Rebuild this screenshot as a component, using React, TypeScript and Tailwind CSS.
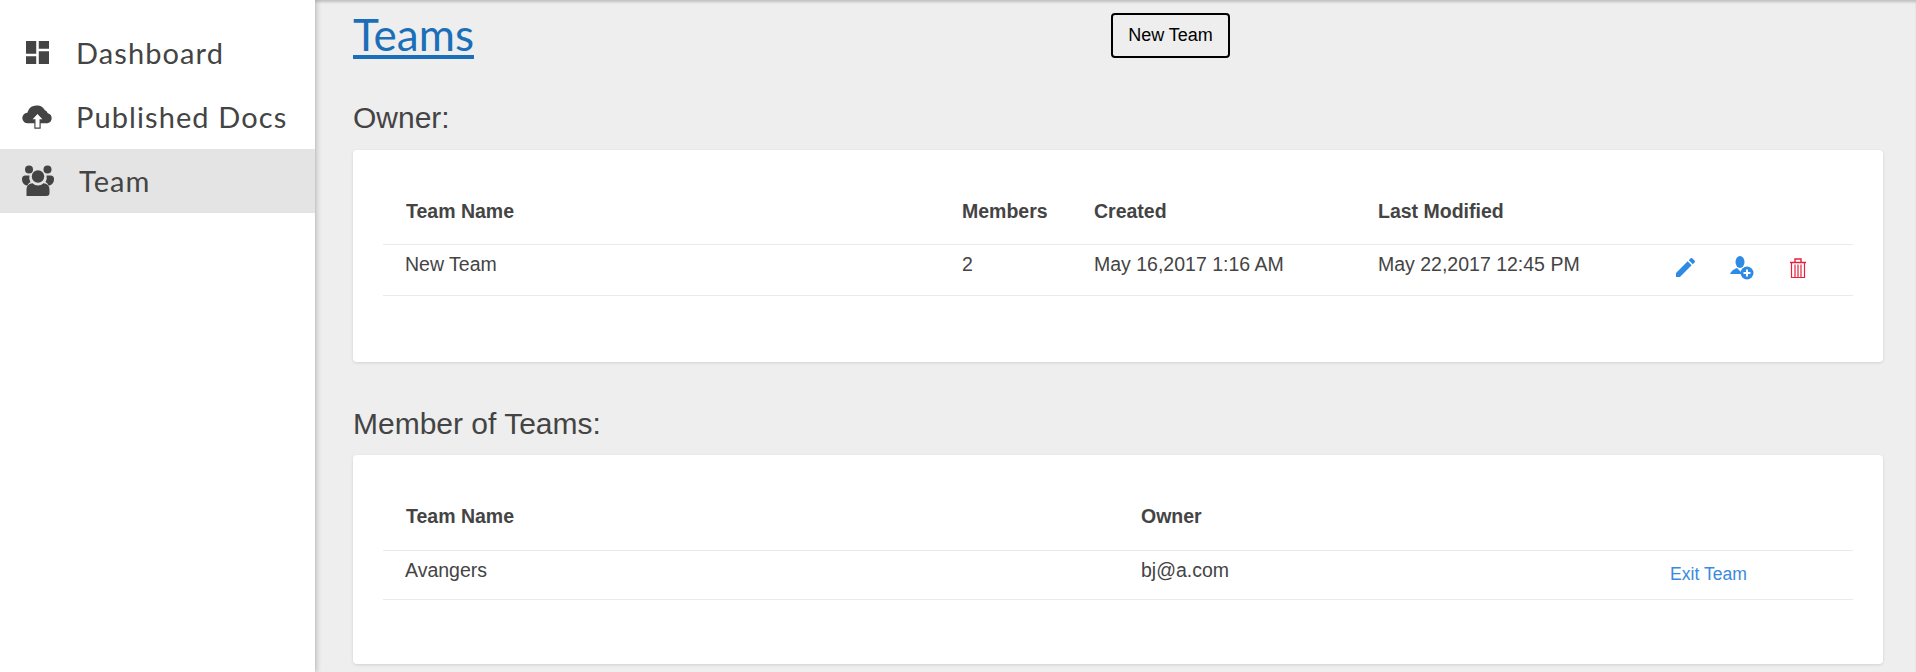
import React from 'react';

const DashboardIcon = () => (
  <svg viewBox="3 3 18 18" className="w-[23px] h-[23px] fill-[#444] -mt-[2px]">
    <path d="M3 13h8V3H3v10zm0 8h8v-6H3v6zm10 0h8V11h-8v10zm0-18v6h8V3h-8z" />
  </svg>
);

const CloudIcon = () => (
  <svg viewBox="0 0 32 26" className="w-[31px] h-[25px]">
    <path
      fill="#444"
      d="M6 19a5.500 5.500 0 0 1-.6-11A9.500 9.500 0 0 1 16 .5a8.500 8.500 0 0 1 7.500 4.800 6 6 0 0 1 3.200 3.200A5.400 5.400 0 0 1 26.500 19z"
    />
    <path fill="#fff" stroke="#444" strokeWidth="1.200" d="M16 8.500l6.500 7h-3.800v8.500h-5.400v-8.500H9.500z" />
  </svg>
);

const UsersIcon = () => (
  <svg viewBox="0 0 32 31" className="w-[32px] h-[31px] fill-[#444] -mt-[2px]">
    <circle cx="7" cy="4.500" r="4" />
    <circle cx="25.500" cy="4.500" r="4" />
    <path d="M0 14a3.500 3.500 0 0 1 3.500-3.500h4a8 8 0 0 0 1 6.500c-1.500 1-2.500 2-3 3.500C2.500 20.500 0 18 0 14z" />
    <path d="M32 14a3.500 3.500 0 0 0-3.500-3.500h-4a8 8 0 0 1-1 6.500c1.500 1 2.500 2 3 3.500 3 0 5.500-2.500 5.500-6.500z" />
    <circle cx="16" cy="11.500" r="6.200" />
    <path d="M4.500 31V24.500a6 6 0 0 1 6-6.300 8 8 0 0 0 11 0 6 6 0 0 1 6 6.300V28a3 3 0 0 1-3 3z" />
  </svg>
);

const EditIcon = () => (
  <svg viewBox="3 3 18 18" className="w-[19px] h-[19px] fill-[#2f8ae4]">
    <path d="M3 17.250V21h3.750L17.810 9.940l-3.750-3.750L3 17.250zM20.710 7.040a.996.996 0 0 0 0-1.410l-2.340-2.340a.996.996 0 0 0-1.410 0l-1.830 1.830 3.750 3.750 1.830-1.830z" />
  </svg>
);

const AddUserIcon = () => (
  <svg viewBox="0 0 24 24" className="w-[24px] h-[24px]">
    <ellipse cx="10" cy="6" rx="4.500" ry="6" fill="#2f8ae4" />
    <path fill="#2f8ae4" d="M0 18c1-3 4-5 7-6l3 3 2 3z" />
    <circle cx="17" cy="17" r="6.500" fill="#2f8ae4" />
    <path stroke="#fff" strokeWidth="2" d="M17 13.500v7M13.500 17h7" />
  </svg>
);

const TrashIcon = () => (
  <svg viewBox="0 0 16 20" className="w-[16px] h-[20px] fill-none stroke-[#e2223f]">
    <path strokeWidth="1.400" d="M0 4.500h16M5 4.500V1h6v3.500" />
    <path strokeWidth="1.200" d="M1.500 4.500v15h13v-15M5 6.500v13M8 6.500v13M11 6.500v13" />
  </svg>
);

const Sidebar = () => (
  <aside className="w-[315px] shrink-0 bg-white pt-[21px] shadow-[2px_0_5px_rgba(0,0,0,0.18)] z-10 font-['Lato',sans-serif] text-[29px] tracking-[1.1px] text-[#444]">
    <div className="flex items-center h-[64px] pl-[26px]">
      <span className="w-[50px]"><DashboardIcon /></span>
      <span>Dashboard</span>
    </div>
    <div className="flex items-center h-[64px] pl-[22px]">
      <span className="w-[54px]"><CloudIcon /></span>
      <span>Published Docs</span>
    </div>
    <div className="flex items-center h-[64px] pl-[22px] bg-[#e4e4e4]">
      <span className="w-[57px]"><UsersIcon /></span>
      <span>Team</span>
    </div>
  </aside>
);

const App = () => {
  return (
    <div className="flex h-[672px] overflow-hidden bg-[#eeeeee] font-['Liberation_Sans',Arial,sans-serif] text-[19.5px] text-[#444]">
      <Sidebar />
      <main className="flex-1 pl-[38px] pr-[33px] pt-[13px] shadow-[inset_0_3px_3px_-1px_rgba(0,0,0,0.2)]">
        <div className="flex h-[45px]">
          <div className="w-[758px] -mt-[3px]">
            <a href="#" className="font-['Lato',sans-serif] text-[44px] leading-[48px] text-[#1a6fb8] underline underline-offset-[4px]">
              Teams
            </a>
          </div>
          <button className="w-[119px] h-[45px] border-2 border-black rounded-[4px] text-[18px] text-black">
            New Team
          </button>
        </div>

        <h2 className="mt-[40px] h-[40px] leading-[40px] text-[30px]">Owner:</h2>
        <section className="mt-[12px] h-[212px] bg-white rounded-[4px] shadow-[0_1px_3px_rgba(0,0,0,0.12)] pt-[35px] pl-[30px] pr-[30px]">
          <div className="grid grid-cols-[556px_132px_284px_1fr] items-center h-[60px] pb-[6px] pl-[23px] border-b border-[#eaeaea] font-bold">
            <div>Team Name</div>
            <div>Members</div>
            <div>Created</div>
            <div>Last Modified</div>
          </div>
          <div className="grid grid-cols-[557px_132px_284px_298px_1fr] items-center h-[51px] pb-[10px] pl-[22px] border-b border-[#eaeaea]">
            <div>New Team</div>
            <div>2</div>
            <div>May 16,2017 1:16 AM</div>
            <div>May 22,2017 12:45 PM</div>
            <div className="flex items-center mt-[5px]">
              <EditIcon />
              <span className="ml-[35px]"><AddUserIcon /></span>
              <span className="ml-[36px]"><TrashIcon /></span>
            </div>
          </div>
        </section>

        <h2 className="mt-[42px] h-[40px] leading-[40px] text-[30px]">Member of Teams:</h2>
        <section className="mt-[11px] h-[209px] bg-white rounded-[4px] shadow-[0_1px_3px_rgba(0,0,0,0.12)] pt-[35px] pl-[30px] pr-[30px]">
          <div className="grid grid-cols-[735px_1fr] items-center h-[61px] pb-[6px] pl-[23px] border-b border-[#eaeaea] font-bold">
            <div>Team Name</div>
            <div>Owner</div>
          </div>
          <div className="grid grid-cols-[736px_529px_1fr] items-center h-[49px] pb-[8px] pl-[22px] border-b border-[#eaeaea]">
            <div>Avangers</div>
            <div>bj@a.com</div>
            <a href="#" className="mt-[6px] text-[17.6px] text-[#3a8ae0]">Exit Team</a>
          </div>
        </section>
      </main>
    </div>
  );
};

export default App;
